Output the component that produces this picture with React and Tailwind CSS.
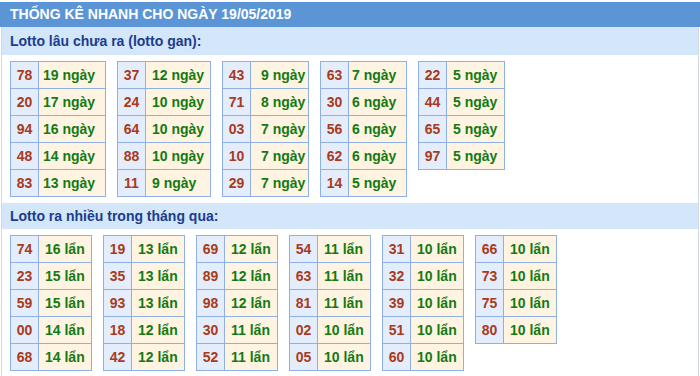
const gan = [
  { w: "w-[96px]", pl: "pl-[4px]", rows: [["78", "19"], ["20", "17"], ["94", "16"], ["48", "14"], ["83", "13"]] },
  { w: "w-[94px]", pl: "pl-[6px]", rows: [["37", "12"], ["24", "10"], ["64", "10"], ["88", "10"], ["11", "9"]] },
  { w: "w-[87px]", pl: "pl-[10px]", rows: [["43", "9"], ["71", "8"], ["03", "7"], ["10", "7"], ["29", "7"]] },
  { w: "w-[87px]", pl: "pl-[3px]", rows: [["63", "7"], ["30", "6"], ["56", "6"], ["62", "6"], ["14", "5"]] },
  { w: "w-[87px]", pl: "pl-[6px]", rows: [["22", "5"], ["44", "5"], ["65", "5"], ["97", "5"]] },
];

const nhieu = [
  [["74", "16"], ["23", "15"], ["59", "15"], ["00", "14"], ["68", "14"]],
  [["19", "13"], ["35", "13"], ["93", "13"], ["18", "12"], ["42", "12"]],
  [["69", "12"], ["89", "12"], ["98", "12"], ["30", "11"], ["52", "11"]],
  [["54", "11"], ["63", "11"], ["81", "11"], ["02", "10"], ["05", "10"]],
  [["31", "10"], ["32", "10"], ["39", "10"], ["51", "10"], ["60", "10"]],
  [["66", "10"], ["73", "10"], ["75", "10"], ["80", "10"]],
];

function Box({ rows, unit, w, pl }) {
  return (
    <div className={`${w} border-t border-l border-[#8fb0e2] shrink-0`}>
      {rows.map(([so, n], i) => (
        <div key={i} className="flex h-[27px]">
          <div className="w-[28px] shrink-0 flex items-center justify-center bg-[#e3edfb] text-[#a93a1b] border-r border-b border-[#8fb0e2]">
            {so}
          </div>
          <div className={`flex-1 flex items-center ${pl} bg-[#fff4e1] text-[#137a13] border-r border-b border-[#8fb0e2]`}>
            {n} {unit}
          </div>
        </div>
      ))}
    </div>
  );
}

export default function App() {
  return (
    <div className="w-[700px] h-[376px] bg-white pt-[2px] overflow-hidden font-['Liberation_Sans',Arial,sans-serif] font-bold text-[14px]">
      {/* tiêu đề */}
      <div className="h-[25px] bg-[#5b95d6] text-white flex items-center pl-[10px] text-[14px]">
        THỐNG KÊ NHANH CHO NGÀY 19/05/2019
      </div>
      <div className="mx-[1px] border-x border-[#cfd7e2] h-[349px]">
        <div className="h-[28px] bg-[#d3e6fa] text-[#1b3d8d] flex items-center pl-[8px]">
          Lotto lâu chưa ra (lotto gan):
        </div>
        <div className="flex gap-[11px] pl-[8px] pt-[6px] h-[148px] items-start">
          {gan.map((t, i) => (
            <Box key={i} rows={t.rows} unit="ngày" w={t.w} pl={t.pl} />
          ))}
        </div>
        <div className="h-[26px] bg-[#d3e6fa] text-[#1b3d8d] flex items-center pl-[8px]">
          Lotto ra nhiều trong tháng qua:
        </div>
        <div className="flex gap-[11px] pl-[8px] pt-[6px] items-start">
          {nhieu.map((rows, i) => (
            <Box key={i} rows={rows} unit="lẩn" w="w-[82px]" pl="pl-[6px]" />
          ))}
        </div>
      </div>
    </div>
  );
}
